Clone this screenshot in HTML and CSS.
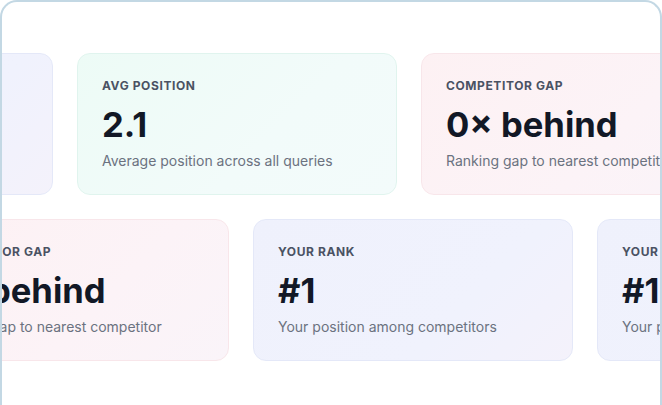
FILE: index.html
```html
<!DOCTYPE html>
<html>
<head>
<meta charset="utf-8">
<link rel="stylesheet" href="styles.css">
</head>
<body>
<div class="frame">
  <div class="row row-1">
    <div class="card card-blue">
      <div class="label">YOUR RANK</div>
      <div class="value">#1</div>
      <div class="desc">Your position among competitors</div>
    </div>
    <div class="card card-mint">
      <div class="label">AVG POSITION</div>
      <div class="value">2.1</div>
      <div class="desc">Average position across all queries</div>
    </div>
    <div class="card card-pink">
      <div class="label">COMPETITOR GAP</div>
      <div class="value">0× behind</div>
      <div class="desc">Ranking gap to nearest competitor</div>
    </div>
  </div>
  <div class="row row-2">
    <div class="card card-pink">
      <div class="label">COMPETITOR GAP</div>
      <div class="value">0× behind</div>
      <div class="desc">Ranking gap to nearest competitor</div>
    </div>
    <div class="card card-blue">
      <div class="label">YOUR RANK</div>
      <div class="value">#1</div>
      <div class="desc">Your position among competitors</div>
    </div>
    <div class="card card-blue">
      <div class="label">YOUR RANK</div>
      <div class="value">#1</div>
      <div class="desc">Your position among competitors</div>
    </div>
  </div>
</div>
</body>
</html>
```
FILE: styles.css
```css
html, body {
  margin: 0;
  padding: 0;
  background: #ffffff;
}
body {
  width: 662px;
  height: 405px;
  overflow: hidden;
  font-family: Inter, "Noto Sans", sans-serif;
}
.frame {
  box-sizing: border-box;
  width: 662px;
  height: 430px;
  border: 2px solid #c3d8e4;
  border-bottom: none;
  border-radius: 17px 17px 0 0;
  overflow: hidden;
  padding-top: 51px;
  display: flex;
  flex-direction: column;
  gap: 24px;
}
.row {
  display: flex;
  gap: 24px;
  flex-wrap: nowrap;
}
.row-1 { margin-left: -269px; }
.row-2 { margin-left: -93px; }
.card {
  flex: 0 0 auto;
  box-sizing: border-box;
  width: 320px;
  height: 142px;
  border-radius: 13px;
  border: 1px solid;
  padding: 24px 24px 0 24px;
  white-space: nowrap;
}
.card-mint {
  background: linear-gradient(135deg, #edfbf6 0%, #f2fbfa 60%, #f3fbfb 100%);
  border-color: #e0f4ee;
}
.card-pink {
  background: linear-gradient(135deg, #fdf1f3 0%, #fcf3f7 60%, #faf4f9 100%);
  border-color: #f8e6ea;
}
.card-blue {
  background: linear-gradient(135deg, #eff1fc 0%, #f0f2fd 65%, #f4f2fb 100%);
  border-color: #e4e8f8;
}
.label {
  font-size: 12px;
  line-height: 16px;
  font-weight: 700;
  letter-spacing: 0.6px;
  color: #4a5263;
}
.value {
  margin-top: 9px;
  font-size: 34.6px;
  line-height: 42px;
  font-weight: 700;
  color: #121826;
  letter-spacing: 0;
}
.desc {
  margin-top: 6px;
  font-size: 14px;
  line-height: 20px;
  color: #6b7280;
}
```
